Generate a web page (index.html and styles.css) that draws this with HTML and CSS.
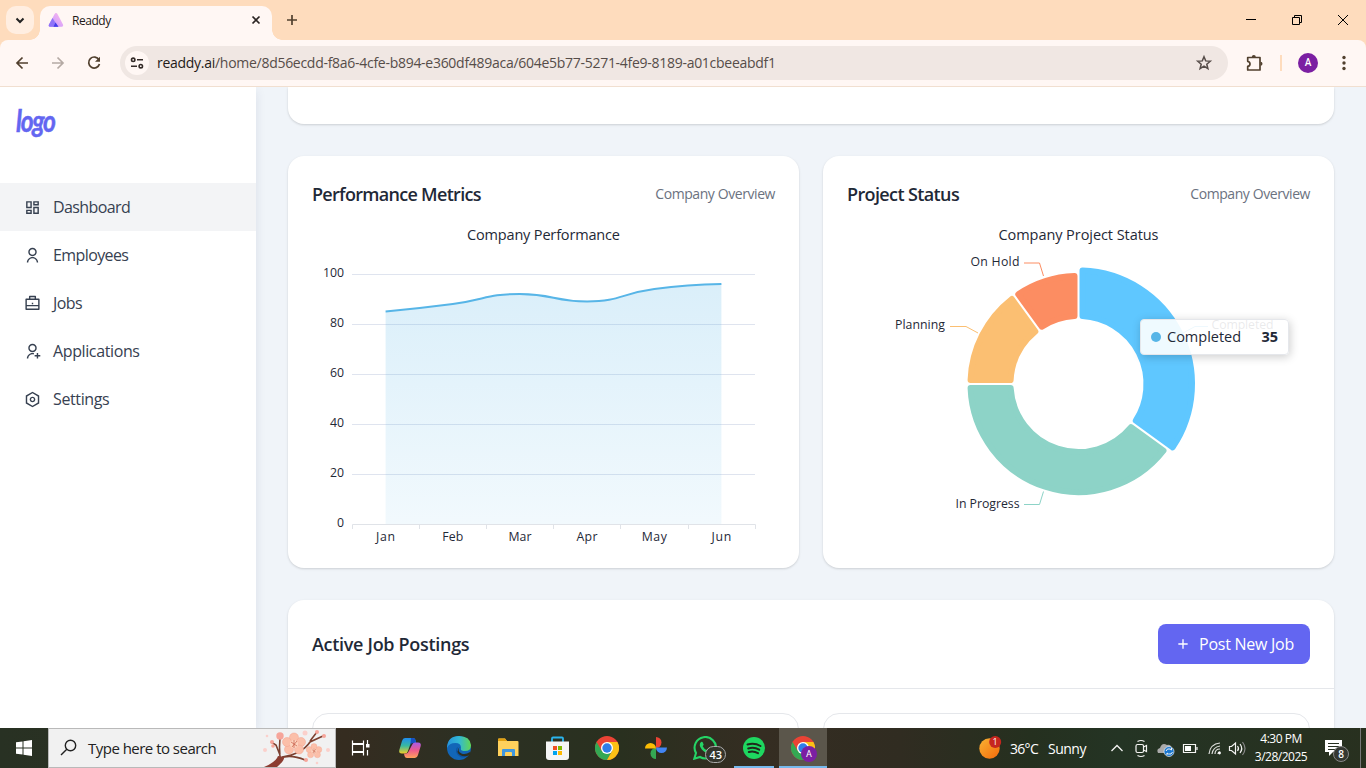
FILE: index.html
```html
<!DOCTYPE html>
<html lang="en">
<head>
<meta charset="utf-8">
<title>Readdy</title>
<link rel="stylesheet" href="styles.css">
</head>
<body>
<header class="tabstrip">
  <div class="tab-search"><svg width="28" height="28" viewBox="0 0 28 28"><path d="M10.500 12.500l3.500 3.500 3.500-3.500" fill="none" stroke="#222" stroke-width="2"/></svg></div>
  <div class="tab">
    <svg width="16" height="16" viewBox="0 0 16 16"><defs><linearGradient id="rd" x1="0" y1="1" x2="1" y2="0"><stop offset="0" stop-color="#b98af7"/><stop offset=".5" stop-color="#dfa8f7"/><stop offset="1" stop-color="#ffb9ea"/></linearGradient></defs><path d="M8 1q1 0 1.600 1.200L15 12.500q.8 1.800-1 2.200H2Q0 14.500 1 12.500L6.500 2.200Q7.100 1 8 1z" fill="url(#rd)"/><path d="M4.500 6l5.500 8.700H2Q0 14.500 1 12.500z" fill="#8f73f8"/><path d="M7.500 10.500l3 4.200H5.500z" fill="#433be8"/></svg>
    <span class="tab-title">Readdy</span>
    <svg class="tab-close" width="16" height="16" viewBox="0 0 16 16"><path d="M4.500 4.500l7 7m0-7l-7 7" stroke="#2b2523" stroke-width="1.700"/></svg>
  </div>
  <svg class="new-tab" width="16" height="16" viewBox="0 0 16 16"><path d="M8 3v10M3 8h10" stroke="#51402e" stroke-width="1.700"/></svg>
  <div class="window-buttons">
    <svg width="46" height="40" viewBox="0 0 46 40"><path d="M18 19.500h10" stroke="#000"/></svg>
    <svg width="46" height="40" viewBox="0 0 46 40"><path d="M18.500 17.500h7v7h-7zM20.500 17v-1.500h7v7H26" fill="none" stroke="#000"/></svg>
    <svg width="46" height="40" viewBox="0 0 46 40"><path d="M18 15l10 10m0-10L18 25" stroke="#000"/></svg>
  </div>
</header>
<div class="toolbar">
  <svg class="back" width="20" height="20" viewBox="0 0 20 20"><path d="M16 10H5m5.500-5.500L5 10l5.500 5.500" fill="none" stroke="#51402e" stroke-width="1.700"/></svg>
  <svg class="forward" width="20" height="20" viewBox="0 0 20 20"><path d="M4 10h11M9.500 4.500L15 10l-5.500 5.500" fill="none" stroke="#b5aaa4" stroke-width="1.700"/></svg>
  <svg class="reload" width="20" height="20" viewBox="0 0 20 20"><path d="M15 6.800A5.500 5.500 0 1 0 15.500 11" fill="none" stroke="#51402e" stroke-width="1.700"/><path d="M16 3.800v5h-5z" fill="#51402e"/></svg>
  <div class="omnibox">
    <span class="site-info"><svg width="16" height="16" viewBox="0 0 16 16" fill="none" stroke="#332b28" stroke-width="1.600"><circle cx="4.200" cy="4.800" r="1.700"/><path d="M8 4.800h6M2 11.200h6"/><circle cx="11.800" cy="11.200" r="1.700"/></svg></span>
    <span class="url"><b>readdy.ai</b>/home/8d56ecdd-f8a6-4cfe-b894-e360df489aca/604e5b77-5271-4fe9-8189-a01cbeeabdf1</span>
    <svg class="star" width="18" height="18" viewBox="0 0 18 18"><path d="M9 2.700l1.700 4.200 4.600.3-3.500 3 1.100 4.500L9 12.200l-3.900 2.500 1.100-4.500-3.500-3 4.600-.3z" fill="none" stroke="#564d49" stroke-width="1.500"/></svg>
  </div>
  <svg class="puzzle" width="20" height="20" viewBox="0 0 20 20"><path d="M3.700 4.500h12.300V17H3.700v-3.600q2.300-.4 2.300-2.500T3.700 8.300z" fill="none" stroke="#51402e" stroke-width="1.700" stroke-linejoin="round"/><path d="M7.800 4a2 2 0 0 1 4 0zM16.500 8.800a2 2 0 0 1 0 4z" fill="#51402e"/></svg>
  <span class="divider"></span>
  <span class="avatar">A</span>
  <svg class="menu" width="16" height="20" viewBox="0 0 16 20" fill="#51402e"><circle cx="8" cy="4.500" r="1.700"/><circle cx="8" cy="10" r="1.700"/><circle cx="8" cy="15.500" r="1.700"/></svg>
</div>
<div class="page">
  <aside class="sidebar">
    <div class="logo"><span>logo</span></div>
    <nav>
      <a class="nav-item active"><svg viewBox="0 0 24 24"><path d="M13 21V11H21V21H13ZM3 13V3H11V13H3ZM9 11V5H5V11H9ZM3 21V15H11V21H3ZM5 19H9V17H5V19ZM15 19H19V13H15V19ZM13 3H21V9H13V3ZM15 5V7H19V5H15Z"/></svg><span>Dashboard</span></a>
      <a class="nav-item employees"><svg viewBox="0 0 24 24"><path d="M4 22C4 17.582 7.582 14 12 14S20 17.582 20 22H18C18 18.686 15.314 16 12 16S6 18.686 6 22H4ZM12 13C8.685 13 6 10.315 6 7S8.685 1 12 1 18 3.685 18 7 15.315 13 12 13ZM12 11C14.210 11 16 9.210 16 7S14.210 3 12 3 8 4.790 8 7 9.790 11 12 11Z"/></svg><span>Employees</span></a>
      <a class="nav-item"><svg viewBox="0 0 24 24"><path d="M7 5V2C7 1.450 7.450 1 8 1H16C16.550 1 17 1.450 17 2V5H21C21.550 5 22 5.450 22 6V20C22 20.550 21.550 21 21 21H3C2.450 21 2 20.550 2 20V6C2 5.450 2.450 5 3 5H7ZM4 16V19H20V16H4ZM4 14H20V7H4V14ZM9 3V5H15V3H9ZM11 11H13V13H11V11Z"/></svg><span>Jobs</span></a>
      <a class="nav-item applications"><svg viewBox="0 0 24 24"><path d="M14 14.252V16.341C13.374 16.120 12.701 16 12 16C8.686 16 6 18.686 6 22H4C4 17.582 7.582 14 12 14C12.691 14 13.361 14.088 14 14.252ZM12 13C8.685 13 6 10.315 6 7S8.685 1 12 1 18 3.685 18 7 15.315 13 12 13ZM12 11C14.210 11 16 9.210 16 7S14.210 3 12 3 8 4.790 8 7 9.790 11 12 11ZM18 17V14H20V17H23V19H20V22H18V19H15V17H18Z"/></svg><span>Applications</span></a>
      <a class="nav-item applications"><svg viewBox="0 0 24 24"><path d="M12 1L21.500 6.500V17.500L12 23L2.500 17.500V6.500L12 1ZM12 3.311L4.500 7.653V16.347L12 20.689L19.500 16.347V7.653L12 3.311ZM12 16C9.791 16 8 14.209 8 12S9.791 8 12 8 16 9.791 16 12 14.209 16 12 16ZM12 14C13.105 14 14 13.105 14 12S13.105 10 12 10 10 10.895 10 12 10.895 14 12 14Z"/></svg><span>Settings</span></a>
    </nav>
  </aside>
  <main class="content">
    <section class="card card-tail"></section>
    <div class="charts">
      <section class="card chart-card">
        <div class="card-head"><h2 class="t-perf">Performance Metrics</h2><span class="scope">Company Overview</span></div>
        <div class="chart">
          <svg width="463" height="320" viewBox="0 0 463 320">
            <defs><linearGradient id="area" x1="0" y1="0" x2="0" y2="1"><stop offset="0" stop-color="#57b5e7" stop-opacity=".22"/><stop offset="1" stop-color="#57b5e7" stop-opacity=".08"/></linearGradient></defs>
            <text class="chart-title" x="231.500" y="16" textLength="153" text-anchor="middle">Company Performance</text>
            <path d="M40 50.500h403M40 100.500h403M40 150.500h403M40 200.500h403M40 250.500h403" stroke="#dfe4ef"/>
            <path d="M73.600 87.500C73.600 87.500 107.200 84.400 140.800 80C174.400 75.600 174.300 70 207.900 70C241.500 70 241.500 77.500 275.100 77.500C308.700 77.500 308.700 69.400 342.300 65C375.900 60.600 409.400 60 409.400 60V300H73.600z" fill="url(#area)"/>
            <path d="M40.500 305v-4.500h403V305M107.500 300v5M174.500 300v5M241.500 300v5M308.500 300v5M376.500 300v5" fill="none" stroke="#e0e3e8"/>
            <path d="M73.600 87.500C73.600 87.500 107.200 84.400 140.800 80C174.400 75.600 174.300 70 207.900 70C241.500 70 241.500 77.500 275.100 77.500C308.700 77.500 308.700 69.400 342.300 65C375.900 60.600 409.400 60 409.400 60" fill="none" stroke="#57b5e7" stroke-width="2"/>
            <g class="axis" text-anchor="end"><text x="32" y="53" textLength="21">100</text><text x="32" y="103" textLength="14">80</text><text x="32" y="153" textLength="14">60</text><text x="32" y="203" textLength="14">40</text><text x="32" y="253" textLength="14">20</text><text x="32" y="303" textLength="7">0</text></g>
            <g class="axis" text-anchor="middle"><text x="73.500" y="317" textLength="19">Jan</text><text x="140.800" y="317" textLength="21">Feb</text><text x="208" y="317" textLength="23">Mar</text><text x="275" y="317" textLength="21">Apr</text><text x="342.300" y="317" textLength="25">May</text><text x="409.400" y="317" textLength="20">Jun</text></g>
          </svg>
        </div>
      </section>
      <section class="card chart-card">
        <div class="card-head"><h2 class="t-status">Project Status</h2><span class="scope">Company Overview</span></div>
        <div class="chart">
          <svg width="463" height="320" viewBox="0 0 463 320">
            <text class="chart-title" x="231.500" y="16" textLength="160" text-anchor="middle">Company Project Status</text>
            <g transform="translate(231.500 160)" stroke-width="6" stroke-linejoin="round">
              <path d="M4-113.430A113.500 113.500 0 0 1 94.120 63.440L57.270 36.660A68 68 0 0 0 4-67.880z" fill="#5fc7ff" stroke="#5fc7ff"/>
              <path d="M84.970 66.680A108 108 0 0 1-107.930 4L-67.880 4A68 68 0 0 0 52.570 43.140z" fill="#8dd3c7" stroke="#8dd3c7"/>
              <path d="M-107.930-4A108 108 0 0 1-66.680-84.970L-43.140-52.570A68 68 0 0 0-67.880-4z" fill="#fbbf72" stroke="#fbbf72"/>
              <path d="M-60.200-89.670A108 108 0 0 1-4-107.930L-4-67.880A68 68 0 0 0-36.660-57.270z" fill="#fc8d62" stroke="#fc8d62"/>
            </g>
            <g fill="none"><path d="M177 39h15.500l4 13" stroke="#fc8d62"/><path d="M103 102.500h16l12 6.500" stroke="#fbbf72"/><path d="M177 280.500h15.500l4-13" stroke="#8dd3c7"/><path d="M336 109l12-6.500h13" stroke="#57b5e7"/></g>
            <g class="axis"><text x="123.500" y="42" textLength="49">On Hold</text><text x="48" y="105" textLength="50">Planning</text><text x="108.500" y="284" textLength="64">In Progress</text><text x="364.500" y="105" textLength="62">Completed</text></g>
          </svg>
          <div class="tooltip"><i></i><span>Completed</span><b>35</b></div>
        </div>
      </section>
    </div>
    <section class="card jobs-card">
      <div class="jobs-head"><h2 class="t-jobs">Active Job Postings</h2><button><svg width="16" height="16" viewBox="0 0 24 24"><path d="M11 11V5H13V11H19V13H13V19H11V13H5V11H11Z" fill="#fff"/></svg><span>Post New Job</span></button></div>
      <div class="job-grid"><div class="job"></div><div class="job"></div></div>
    </section>
  </main>
</div>
<footer class="taskbar">
  <div class="start"><svg width="16" height="16" viewBox="0 0 16 16" fill="#fff"><path d="M0 2.300L6.500 1.400V7.500H0zM7.500 1.300L16 0V7.500H7.500zM0 8.500H6.500V14.600L0 13.700zM7.500 8.500H16V16L7.500 14.700z"/></svg></div>
  <div class="search">
    <svg width="18" height="18" viewBox="0 0 18 18" fill="none" stroke="#222" stroke-width="1.400"><circle cx="10.500" cy="6.500" r="5.200"/><path d="M6.800 10.200L1 16"/></svg>
    <span>Type here to search</span>
    <svg class="blossom" width="72" height="38" viewBox="0 0 72 38">
      <path d="M17 26L13 16L8 13M17 28Q16 18 17 9M17 29Q28 25 42 31M19 28Q39 25 47 13L60 7M47 12L54 3" fill="none" stroke="#7b4030" stroke-width="1.600"/><path d="M1 38Q13 33 15 27L21 28Q22 31 14 38z" fill="#8b3d31"/>
      <defs><g id="flower"><g fill="#fbbfa9" stroke="#f2a290" stroke-width=".5"><circle cx="0" cy="-6.500" r="4.500"/><circle cx="7" cy="-2" r="4.500"/><circle cx="5" cy="5.500" r="4.500"/><circle cx="-5" cy="5.500" r="4.500"/><circle cx="-7" cy="-2" r="4.500"/></g><circle r="4" fill="#fdd5c0"/><path d="M-3-2l6 4M3-3l-5 6M0-4v8" stroke="#c65a45" stroke-width=".7"/></g></defs>
      <use href="#flower" x="31" y="15"/><use href="#flower" transform="translate(51 22) scale(.68)"/>
      <g fill="#f6a59a"><circle cx="17" cy="7" r="3.700"/><circle cx="9" cy="13" r="2"/><circle cx="10" cy="17" r="1.800"/><circle cx="54" cy="3" r="2"/><circle cx="61" cy="7" r="2"/><circle cx="43" cy="31" r="2"/></g><g fill="#fbd0cb"><circle cx="2" cy="21" r="2"/><circle cx="4" cy="7" r="1.300"/><circle cx="42" cy="4" r="2.500"/><circle cx="65" cy="21" r="2"/><circle cx="54" cy="34" r="1.300"/></g>
    </svg>
  </div>
  <div class="apps">
    <span class="app taskview"><svg viewBox="0 0 24 24" fill="none" stroke="#fff" stroke-width="1.200"><path d="M4.500 4.500v3h11v-3M4.500 19.500v-3h11v3M4.500 8.500h11v7h-11zM19.500 4v5M19.500 14v5.500"/><path d="M18 8h3.500v3.500H18z" fill="#fff" stroke="none"/></svg></span>
    <span class="app"><svg viewBox="0 0 24 24"><defs><linearGradient id="c1" x1="0" y1="0" x2="0" y2="1"><stop stop-color="#1f8df0"/><stop offset=".5" stop-color="#38b9a0"/><stop offset="1" stop-color="#f0ce28"/></linearGradient><linearGradient id="c2" x1="0" y1="0" x2="0" y2="1"><stop stop-color="#a85be8"/><stop offset=".5" stop-color="#ed5a8c"/><stop offset="1" stop-color="#ffa25a"/></linearGradient></defs><path d="M7 2h8q2 0 2.500 2l.5 2h-3q-2 0-2.600 2L10 15q-.7 2.500-3 2.500H4Q.5 17.500 1.300 14L4 5q.8-3 3-3z" fill="url(#c1)"/><path d="M13 2h2q2 0 2.500 2l.7 3H15q-2 0-2.700 2z" fill="#1550c5"/><path d="M17 22H9q-2 0-2.500-2L6 17.500h2q2 0 2.600-2L14 9q.7-2.500 3-2.500h3q3.500 0 2.700 3.500L20 19q-.8 3-3 3z" fill="url(#c2)"/></svg></span>
    <span class="app"><svg viewBox="0 0 24 24"><defs><linearGradient id="e1"><stop stop-color="#2794dc"/><stop offset=".5" stop-color="#32b8d5"/><stop offset="1" stop-color="#62d652"/></linearGradient></defs><circle cx="12" cy="12" r="12" fill="#1266b8"/><path d="M0 11Q1 0 12 0q11 .2 12 9 .2 6-6 6-5 0-4-3Q14 7 8.500 7 2 7 0 12z" fill="url(#e1)"/><path d="M9.500 12q-2 6 4 9 5 2 9-3-4 2.500-8.500.5-5-2.500-3-7.500z" fill="#0d54a3"/><path d="M12.500 11q-2.500 4.500 2 6.500 4 1.500 8.500-1.500l.7 1-1.200 2q-5 2.500-9.500 0-4.500-3-.5-8z" fill="#2c2f22"/></svg></span>
    <span class="app"><svg viewBox="0 0 24 24"><path d="M2 3.500q0-1 1-1h6l2 2.500h10.500q1 0 1 1v14H2z" fill="#ffd15c"/><path d="M2 3.500q0-1 1-1h6l2 2.500H2z" fill="#e2a010"/><path d="M6 20v-6q0-1 1-1h11q1 0 1 1v6h-3v-3q0-1-1-1h-5q-1 0-1 1v3z" fill="#3f97df"/></svg></span>
    <span class="app"><svg viewBox="0 0 24 24"><path d="M7 6V2.500Q7 1.500 8 1.500h9q1 0 1 1V6" fill="none" stroke="#2bb5ee" stroke-width="1.800"/><path d="M1 5.500h23v15.500q0 3-3 3H4q-3 0-3-3z" fill="#f5f5f5"/><path d="M8 10h4v4H8z" fill="#f05022"/><path d="M13 10h4v4h-4z" fill="#7fba00"/><path d="M8 15h4v4H8z" fill="#00a4ef"/><path d="M13 15h4v4h-4z" fill="#ffb900"/></svg></span>
    <span class="app"><svg viewBox="0 0 24 24"><use href="#chrome"/></svg></span>
    <span class="app"><svg viewBox="0 0 24 24"><path d="M12 12V1a5.500 5.500 0 0 1 0 11z" fill="#ea4335"/><path d="M12.500 11.500h10.500a5.500 5.500 0 0 1-11 0z" fill="#4285f4"/><path d="M12 12v11a5.500 5.500 0 0 1 0-11z" fill="#34a853"/><path d="M12 12.500H1a5.500 5.500 0 0 1 11 0z" fill="#fbbc04"/></svg></span>
    <span class="app"><svg viewBox="0 0 24 24"><path d="M1.300 22.700L3 17A10.700 10.700 0 1 1 7 21z" fill="none" stroke="#25d366" stroke-width="2.100"/><path d="M8 6q1.500-.7 2 1l.7 1.800-1 1.500q1.400 2.800 4 3.800l1.600-1.500 2.700 1.300q.5 2-2 3Q13 18 9 13.700 5 9 8 6z" fill="#25d366"/></svg><em class="count">43</em></span>
    <span class="app running"><svg viewBox="0 0 24 24"><circle cx="12" cy="12" r="11" fill="#1ed760"/><path d="M5.500 8.500q7-2 13 1.500M6.200 12.500q6-1.800 11 1.200M6.800 16q5-1.300 9.200 1.200" fill="none" stroke="#20281c" stroke-width="2" stroke-linecap="round"/></svg></span>
    <span class="app running current"><svg viewBox="0 0 24 24"><g id="chrome"><circle cx="12" cy="12" r="12" fill="#ea4335"/><path d="M1.600 6a12 12 0 0 0 10.400 18l5.200-9H6.800z" fill="#34a853"/><path d="M22.400 6H12l5.200 9L12 24A12 12 0 0 0 22.400 6z" fill="#fbc116"/><circle cx="12" cy="12" r="6" fill="#fff"/><circle cx="12" cy="12" r="4.700" fill="#2f7de9"/></g></svg><em class="mini-avatar">A</em></span>
  </div>
  <div class="tray">
    <svg class="weather" width="24" height="24" viewBox="0 0 24 24"><defs><linearGradient id="sun" x1="0" y1="0" x2="1" y2="1"><stop stop-color="#f9b233"/><stop offset="1" stop-color="#f46a0b"/></linearGradient></defs><circle cx="10.500" cy="12.500" r="10.200" fill="url(#sun)"/><circle cx="16.200" cy="6" r="6" fill="#c6261e"/><text x="16.200" y="9" text-anchor="middle">1</text></svg>
    <span class="temp">36°C</span><span class="sky">Sunny</span>
    <svg class="tray-icons" width="138" height="24" viewBox="0 0 138 24" fill="none" stroke="#f4f4f2" stroke-width="1.200">
      <path d="M2.500 15l5.500-5.500 5.500 5.500" stroke-width="1.300"/>
      <rect x="27" y="8.500" width="7.500" height="8" rx="1.500"/><path d="M34.500 11l3-1.500v6l-3-1.500M28.500 5.500q3.500-2 7 0M28.500 19.500q3.500 2 7 0"/>
      <path d="M49 17q-2-4 2-5 2-6 7-3 4-1 5 4v4z" fill="#aaa" stroke="none"/><circle cx="60" cy="15.500" r="5" fill="#1b78d0" stroke="#eee" stroke-width=".7"/><path d="M57 15q1-3 4-2l1.500 1v-2m1 4q-1 3-4 2l-1.500-1v2" stroke-width="1"/>
      <path d="M74.500 8.500h12v8h-12zM88 11v3"/><path d="M76 10h6v5h-6z" fill="#fff" stroke="none"/>
      <g stroke="#dfe0dd"><path d="M100 18Q101 8 111 7M103 18q1-7 8-8M106 18q0-5 5-5M109 18q0-2 2-2"/></g><circle cx="110.500" cy="17" r="1.400" fill="#fff" stroke="none"/>
      <path d="M120.500 10.500h2l4-3.500v11l-4-3.500h-2zM128.500 10q2 2.500 0 5M131 8q3.500 4.500 0 9"/><path d="M133.500 6q5 6.500 0 13" stroke="#888"/>
    </svg>
    <div class="clock"><span class="time">4:30 PM</span><span class="date">3/28/2025</span></div>
    <div class="notify"><svg width="17" height="16" viewBox="0 0 17 16"><path d="M0 0h17v12H8l-4 4v-4H0z" fill="#fff"/><path d="M3 3.500h11M3 6.500h11M3 9.500h7" stroke="#273022"/></svg><em>8</em></div>
    <i class="peek"></i>
  </div>
</footer>
</body>
</html>
```
FILE: styles.css
```css
* { box-sizing: border-box; }
body { margin: 0; width: 1366px; height: 768px; overflow: hidden; display: flex; flex-direction: column; font-family: "Open Sans", "Noto Sans", sans-serif; background: #fedcbd; }
svg { display: block; flex: none; }
h2 { margin: 0; font-weight: 600; font-size: 18px; line-height: 28px; color: #1f2937; white-space: nowrap; }
em { font-style: normal; }

.tabstrip { height: 40px; flex: none; display: flex; align-items: center; background: #fedcbd; padding-left: 6px; }
.tab-search { width: 28px; height: 28px; border-radius: 10px; background: #ffeee1; }
.tab { align-self: flex-end; margin-left: 6px; width: 232px; height: 34px; border-radius: 10px 10px 0 0; background: #fff7f4; display: flex; align-items: center; padding: 0 8px 6px; position: relative; }
.tab::before, .tab::after { content: ""; position: absolute; bottom: 0; width: 10px; height: 10px; }
.tab::before { left: -10px; background: radial-gradient(circle at 0 0, transparent 9.500px, #fff7f4 10px); }
.tab::after { right: -10px; background: radial-gradient(circle at 100% 0, transparent 9.500px, #fff7f4 10px); }
.tab-title { margin-left: 8px; font-size: 12px; color: #1f1a18; letter-spacing: -.45px; }
.tab-close { margin-left: auto; }
.new-tab { margin-left: 12px; }
.window-buttons { display: flex; margin-left: auto; }

.toolbar { height: 47px; flex: none; display: flex; align-items: center; background: #fff7f4; border-bottom: 1px solid #f1dfd0; border-radius: 8px 8px 0 0; padding: 0 14px 0 12px; }
.forward { margin-left: 16px; }
.reload { margin-left: 16px; }
.omnibox { margin-left: 16px; width: 1108px; flex: none; height: 34px; border-radius: 17px; background: #f0e7e3; display: flex; align-items: center; padding: 0 15px 0 5px; }
.site-info { width: 24px; height: 24px; border-radius: 12px; background: #fff7f4; display: flex; align-items: center; justify-content: center; }
.url { margin-left: 8px; font-size: 14px; line-height: 20px; padding-bottom: 1px; letter-spacing: -.28px; color: #564d49; white-space: nowrap; }
.url b { font-weight: 400; color: #1f1a18; }
.star { margin-left: auto; }
.puzzle { margin-left: 16px; }
.divider { width: 2px; height: 16px; margin-left: 16px; background: #fedcbd; }
.avatar { width: 20px; height: 20px; margin-left: 16px; border-radius: 50%; background: #7b1fa2; color: #fff; font: 500 10px/20px Roboto, sans-serif; text-align: center; }
.menu { margin-left: 18px; }

.page { flex: 1; min-height: 0; display: flex; background: #f0f4f9; overflow: hidden; }
.sidebar { width: 256px; flex: none; background: #fff; box-shadow: 0 4px 10px rgba(30, 50, 90, .1); }
.logo { height: 96px; padding: 15px 0 0 16px; font: italic 700 30px/36px Lato, sans-serif; letter-spacing: -1.500px; color: #6366f1; }
.logo span { display: inline-block; transform: scaleX(.82); transform-origin: 0 50%; -webkit-text-stroke: .5px #6366f1; }
.nav-item { height: 48px; display: flex; align-items: center; gap: 12px; padding-left: 24px; color: #374151; font-size: 16px; letter-spacing: -.6px; }
.nav-item svg { width: 17px; height: 17px; fill: #374151; }
.applications { letter-spacing: -.38px; }
.active { background: #f3f4f6; }

.content { flex: 1; min-width: 0; padding: 0 32px; display: flex; flex-direction: column; gap: 32px; }
.card { background: #fff; border-radius: 16px; box-shadow: 0 1px 3px rgba(0, 0, 0, .1), 0 1px 2px rgba(0, 0, 0, .06); flex: none; }
.card-tail { height: 37px; border-radius: 0 0 16px 16px; }
.charts { display: grid; grid-template-columns: 1fr 1fr; gap: 24px; flex: none; }
.chart-card { height: 412px; padding: 24px; }
.card-head { display: flex; align-items: center; justify-content: space-between; margin-bottom: 16px; }
.scope { font-size: 14px; line-height: 20px; padding-bottom: 1px; letter-spacing: -.42px; color: #6b7280; }
.chart { position: relative; height: 320px; }
.chart text { fill: #1f2937; }
.chart .chart-title { font-size: 14.500px; }
.chart .axis text { font-size: 12.300px; }
.t-perf { letter-spacing: -.7px; }
.t-status { letter-spacing: -.62px; }
.t-jobs { letter-spacing: -.3px; }
.tooltip { position: absolute; left: 293px; top: 95px; width: 149px; height: 36px; border: 1px solid #e5e7eb; border-radius: 4px; background: rgba(255, 255, 255, .9); box-shadow: 1px 2px 10px rgba(0, 0, 0, .2); display: flex; align-items: center; padding: 0 10px 1px 10px; font-size: 14.500px; color: #1f2937; }
.tooltip i { width: 10px; height: 10px; border-radius: 50%; background: #57b5e7; margin-right: 6px; }
.tooltip b { margin-left: auto; font-weight: 700; }

.jobs-head { display: flex; align-items: center; justify-content: space-between; height: 89px; padding: 0 24px; border-bottom: 1px solid #e5e7eb; }
.jobs-head button { width: 152px; height: 40px; border: 0; border-radius: 8px; background: #6366f1; color: #fff; font: 400 16px "Open Sans", sans-serif; letter-spacing: -.25px; display: flex; align-items: center; padding: 0 0 0 17px; gap: 8px; white-space: nowrap; }
.job-grid { display: grid; grid-template-columns: 1fr 1fr; gap: 24px; padding: 24px; }
.job { height: 180px; border: 1px solid #e5e7eb; border-radius: 16px; }

.taskbar { height: 40px; flex: none; display: flex; position: relative; color: #fff; background: linear-gradient(90deg, #283123 0, #2b3022 150px, #352c20 345px, #2c3023 470px, #29301f 620px, #352d22 760px, #302c21 900px, #25301f 1030px, #243424 1120px, #28301f 1366px); }
.start { width: 48px; display: flex; align-items: center; justify-content: center; }
.search { width: 288px; background: #f1f1f1; border: 1px solid #b9b9b9; display: flex; align-items: center; padding-left: 11px; }
.search span { margin-left: 10px; font-size: 15px; letter-spacing: -.52px; color: #222; white-space: nowrap; }
.blossom { margin-left: auto; }
.apps { display: flex; }
.app { width: 49.200px; height: 40px; display: flex; align-items: center; justify-content: center; position: relative; }
.app svg { width: 24px; height: 24px; }
.taskview svg { margin-right: 2px; }
.running { border-bottom: 2px solid #76b9ed; width: 40.400px; margin-left: 4.400px; }
.running svg { margin-top: 2px; }
.current { width: 48px; margin-left: 4.600px; background: #5b564b; }
.count { position: absolute; left: 25px; top: 18px; width: 21px; height: 17px; border: 1px solid #aaa; border-radius: 9px; background: #35352c; font-size: 11px; font-weight: 600; line-height: 15px; text-align: center; }
.mini-avatar { position: absolute; left: 22px; top: 18px; width: 16px; height: 16px; border-radius: 50%; background: #7b1fa2; font: 9px/16px Roboto, sans-serif; text-align: center; }
.tray { flex: 1; display: flex; align-items: center; justify-content: flex-end; }
.weather text { font-size: 9px; fill: #fff; }
.temp { margin-left: 7px; width: 31px; font-size: 14px; letter-spacing: -.7px; }
.sky { margin-left: 7px; width: 39px; font-size: 14px; letter-spacing: -.5px; }
.tray-icons { margin-left: 22px; }
.clock { width: 54px; margin-left: 7px; display: flex; flex-direction: column; align-items: center; font-size: 12px; line-height: 18px; letter-spacing: -.5px; white-space: nowrap; }
.notify { position: relative; margin-left: 17px; }
.notify em { position: absolute; left: 8px; top: 6px; width: 16px; height: 16px; border-radius: 50%; border: 1px solid #888; background: #353832; font-size: 10px; font-weight: 600; line-height: 14px; text-align: center; }
.peek { width: 1px; height: 40px; margin: 0 5px 0 18px; background: #777; }
```
